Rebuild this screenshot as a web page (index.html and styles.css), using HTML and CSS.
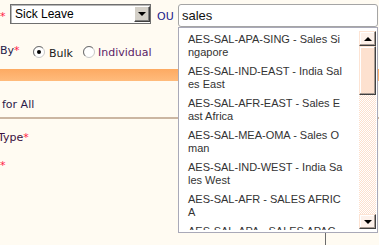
FILE: index.html
```html
<!DOCTYPE html>
<html>
<head>
<meta charset="utf-8">
<link rel="stylesheet" href="styles.css">
</head>
<body>
<div class="page">
  <div class="row-top">
    <span class="req req-top">*</span>
    <div class="select">
      <span class="select-text">Sick Leave</span>
      <span class="select-btn"><span class="tri-down"></span></span>
    </div>
    <span class="ou">OU</span>
    <div class="search">sales</div>
  </div>
  <div class="row-by">
    <span class="by-label">By<span class="req">*</span></span>
    <svg class="radio radio-1" width="12" height="12" viewBox="0 0 12 12">
      <circle cx="6" cy="6" r="5.5" fill="#fff" stroke="#c8c8c8"/>
      <path d="M2.1 9.9 A5.5 5.5 0 0 1 9.9 2.1" fill="none" stroke="#707070"/>
      <circle cx="6" cy="6" r="2" fill="#000"/>
    </svg>
    <span class="opt opt-bulk">Bulk</span>
    <svg class="radio radio-2" width="12" height="12" viewBox="0 0 12 12">
      <circle cx="6" cy="6" r="5.5" fill="#fff" stroke="#c8c8c8"/>
      <path d="M2.1 9.9 A5.5 5.5 0 0 1 9.9 2.1" fill="none" stroke="#707070"/>
    </svg>
    <span class="opt opt-ind">Individual</span>
  </div>
  <div class="bar"></div>
  <div class="forall">for All</div>
  <div class="rule"></div>
  <div class="type">Type<span class="req">*</span></div>
  <div class="req-line"><span class="req">*</span></div>
  <div class="stub"></div>
</div>

<div class="dropdown">
  <div class="list">
    <div class="item">AES-SAL-APA-SING - Sales Singapore</div>
    <div class="item">AES-SAL-IND-EAST - India Sales East</div>
    <div class="item">AES-SAL-AFR-EAST - Sales East Africa</div>
    <div class="item">AES-SAL-MEA-OMA - Sales Oman</div>
    <div class="item">AES-SAL-IND-WEST - India Sales West</div>
    <div class="item">AES-SAL-AFR - SALES AFRICA</div>
    <div class="item">AES-SAL-APA - SALES APAC</div>
  </div>
  <div class="sb">
    <div class="sb-btn"><span class="tri-up"></span></div>
    <div class="sb-thumb"></div>
    <div class="sb-track"></div>
    <div class="sb-btn"><span class="tri-down"></span></div>
  </div>
</div>
</body>
</html>
```

FILE: styles.css
```css
* { box-sizing: border-box; }
html, body { margin: 0; padding: 0; }
body {
  background: #fffbf2;
  width: 379px;
  height: 245px;
  overflow: hidden;
  position: relative;
  font-family: "DejaVu Sans", Verdana, sans-serif;
  font-size: 11px;
  line-height: 13px;
  color: #2a1f40;
}
.req { color: #ff1a44; }

.row-top {
  display: flex;
  align-items: flex-start;
  padding-top: 4px;
  height: 27px;
}
.req-top { width: 10px; margin-top: 6px; }
.select {
  width: 141px;
  height: 20px;
  display: flex;
  align-items: center;
  justify-content: space-between;
  background: #fff;
  border: 1px solid #6f6f6f;
  box-shadow: inset 1px 1px 0 #b8b8b8;
  padding: 0 0 0 4px;
  font-family: "Liberation Sans", Arial, sans-serif;
  font-size: 12px;
  color: #000;
}
.select-btn {
  width: 16px;
  height: 16px;
  background: #d4d0c8;
  border: 1px solid;
  border-color: #fff #404040 #404040 #fff;
  box-shadow: inset -1px -1px 0 #808080;
  display: flex;
  align-items: center;
  justify-content: center;
}
.tri-down {
  width: 0; height: 0;
  border-left: 4px solid transparent;
  border-right: 4px solid transparent;
  border-top: 4px solid #000;
}
.tri-up {
  width: 0; height: 0;
  border-left: 4px solid transparent;
  border-right: 4px solid transparent;
  border-bottom: 4px solid #000;
}
.ou {
  width: 21px;
  margin: 6px 0 0 6px;
  color: #22228a;
}
.search {
  width: 200px;
  height: 23px;
  background: #fff;
  border: 1px solid #a5a5a5;
  border-radius: 3px;
  padding-left: 3px;
  font-family: "Liberation Sans", Arial, sans-serif;
  font-size: 13px;
  line-height: 21px;
  color: #111;
}

.row-by {
  display: flex;
  align-items: flex-start;
  margin-top: 17px;
  height: 16px;
}
.by-label { width: 33px; color: #24204a; }
.radio { display: block; margin-top: 2px; }
.opt-bulk { width: 34px; margin: 3px 0 0 4px; color: #201a20; }
.opt-ind { margin: 2px 0 0 3px; color: #5b1b66; }

.bar {
  margin-top: 9px;
  height: 12px;
  background: linear-gradient(#fdaa62, #ffbb7c);
}
.forall { margin: 17px 0 0 2px; color: #2a1a4a; }
.rule { margin-top: 6px; height: 2px; background: #cbb6a2; }
.type { margin: 12px 0 0 -2px; color: #3a1040; }
.req-line { margin-top: 15px; }
.stub { margin: 60px 0 0 325px; width: 1px; height: 20px; background: #6b6b6b; }

.dropdown {
  position: absolute;
  left: 178px;
  top: 27px;
  width: 200px;
  height: 206px;
  background: #fff;
  border: 1px solid #a9a9b8;
  padding: 2px 1px 2px 3px;
  display: flex;
  font-family: "Liberation Sans", Arial, sans-serif;
  font-size: 11px;
  line-height: 13px;
  color: #333;
}
.list { flex: 1; overflow: hidden; }
.item {
  width: 162px;
  padding: 3px 0 3px 6px;
  word-break: break-all;
}
.sb {
  width: 17px;
  margin: 1px 0;
  display: flex;
  flex-direction: column;
}
.sb-btn {
  height: 15px;
  background: #fdf1ea;
  border: 1px solid;
  border-color: #fde4d4 #404040 #404040 #fde4d4;
  box-shadow: inset -1px -1px 0 #a89a92, inset 1px 1px 0 #fff;
  display: flex;
  align-items: center;
  justify-content: center;
}
.sb-thumb {
  height: 49px;
  background: #fde1cf;
  border: 1px solid;
  border-color: #fde4d4 #404040 #404040 #fde4d4;
  box-shadow: inset -1px -1px 0 #a89a92, inset 1px 1px 0 #fff;
}
.sb-track {
  flex: 1;
  background: repeating-conic-gradient(#fde0cd 0 25%, #ffffff 0 50%) 0 0 / 2px 2px;
}
```
